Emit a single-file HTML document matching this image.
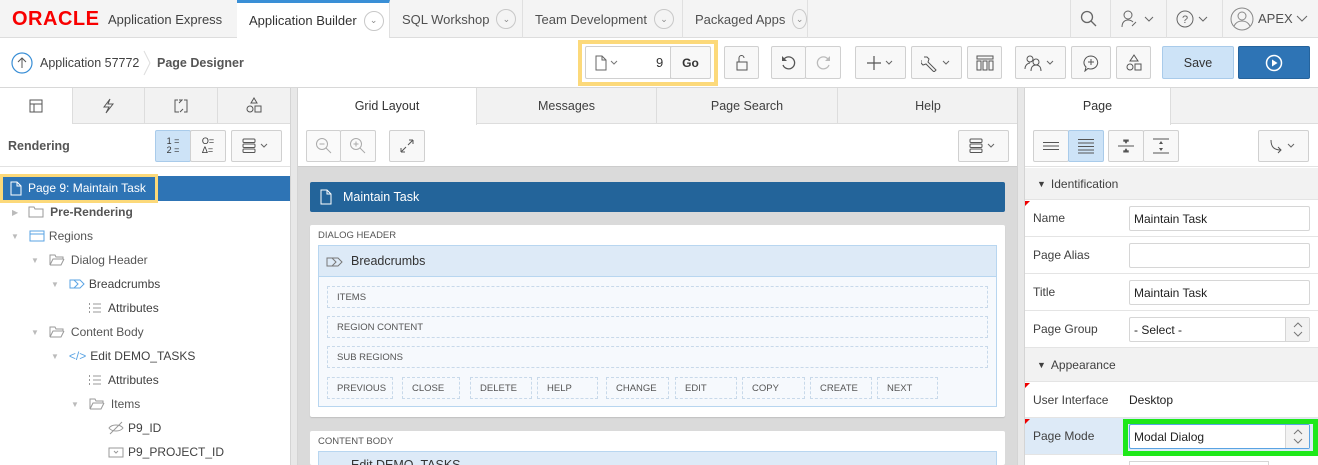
<!DOCTYPE html>
<html><head><meta charset="utf-8"><style>
*{box-sizing:border-box;margin:0;padding:0}
html{width:1318px;height:465px;overflow:hidden}
body{width:1318px;height:465px;overflow:hidden;font-family:"Liberation Sans",sans-serif;font-size:12px;color:#404040;background:#fff;position:relative}
.a{position:absolute}
.btn{position:absolute;border:1px solid #d0d0d0;border-radius:2px;background:#f8f8f8;display:flex;align-items:center;justify-content:center}
svg{display:block}
.tn{position:absolute;top:0;height:38px;border-right:1px solid #e0e0e0;display:flex;align-items:center;padding-left:12px;font-size:13px;color:#505050;white-space:nowrap}
.cv{width:20px;height:20px;border:1px solid #c8c8c8;border-radius:50%;margin-left:7px;display:flex;align-items:center;justify-content:center;font-size:9px;color:#888}
.tr{position:absolute;height:24px;display:flex;align-items:center;font-size:12px;color:#404040;white-space:nowrap}
.ph{position:absolute;left:327px;width:661px;height:22px;border:1px dashed #c8d9ea;font-size:9.5px;color:#555;display:flex;align-items:center;padding-left:9px}
.bb{position:absolute;top:377px;height:22px;border:1px dashed #c8d9ea;font-size:9.5px;color:#555;display:flex;align-items:center;padding-left:9px}
.row{position:absolute;left:1025px;width:293px;border-bottom:1px solid #e4e4e4;display:flex;align-items:center}
.row .l{width:104px;padding-left:8px;font-size:12px;color:#404040}
.inp{position:absolute;left:1129px;width:181px;height:25px;border:1px solid #d6d6d6;border-radius:2px;background:#fff;font-size:12px;color:#222;display:flex;align-items:center;padding-left:4px}
.sec{position:absolute;left:1025px;width:293px;background:#f2f2f2;border-bottom:1px solid #e4e4e4;display:flex;align-items:center;padding-left:12px;font-size:12px;color:#404040}
.red{position:absolute;left:1025px;width:0;height:0;border-top:5px solid #e00;border-right:5px solid transparent}
</style></head><body>
<!-- top nav -->
<div class="a" style="left:0;top:0;width:1318px;height:38px;background:#f4f4f4;border-bottom:1px solid #ddd"></div>
<div class="a" style="left:12px;top:8px;font-size:20px;font-weight:bold;color:#f80000;letter-spacing:0.5px">ORACLE</div>
<div class="a" style="left:108px;top:12px;font-size:13px;color:#404040">Application Express</div>
<div class="tn" style="left:237px;width:153px;background:#fff;border-top:3px solid #3a8fd6;color:#333">Application Builder<div class="cv">&#8964;</div></div>
<div class="tn" style="left:390px;width:133px">SQL Workshop<div class="cv">&#8964;</div></div>
<div class="tn" style="left:523px;width:160px">Team Development<div class="cv">&#8964;</div></div>
<div class="tn" style="left:683px;width:125px">Packaged Apps<div class="cv">&#8964;</div></div>
<div class="a" style="left:1070px;top:0;width:1px;height:38px;background:#e0e0e0"></div>
<div class="a" style="left:1110px;top:0;width:1px;height:38px;background:#e0e0e0"></div>
<div class="a" style="left:1166px;top:0;width:1px;height:38px;background:#e0e0e0"></div>
<div class="a" style="left:1222px;top:0;width:1px;height:38px;background:#e0e0e0"></div>
<svg class="a" style="left:1080px;top:10px" width="18" height="18"><circle cx="7" cy="7" r="5.5" fill="none" stroke="#666" stroke-width="1.3"/><path d="M11 11l5 5" stroke="#666" stroke-width="1.3"/></svg>
<svg class="a" style="left:1120px;top:9px" width="40" height="20"><circle cx="8" cy="6" r="4" fill="none" stroke="#666"/><path d="M2 18c0-5 3-7 6-7s4 1 5 2M12 17l4-4" stroke="#666" fill="none"/><path d="M25 8l4 4 4-4" stroke="#666" fill="none"/></svg>
<svg class="a" style="left:1176px;top:9px" width="40" height="20"><circle cx="9" cy="10" r="8" fill="none" stroke="#666"/><text x="6" y="14" font-size="11" fill="#666" font-family="Liberation Sans">?</text><path d="M23 8l4 4 4-4" stroke="#666" fill="none"/></svg>
<svg class="a" style="left:1230px;top:7px" width="24" height="24"><circle cx="12" cy="12" r="11" fill="none" stroke="#888"/><circle cx="12" cy="9" r="4" fill="none" stroke="#888"/><path d="M4 19c2-4 5-5 8-5s6 1 8 5" stroke="#888" fill="none"/></svg>
<div class="a" style="left:1258px;top:11px;font-size:13px;color:#505050">APEX</div>
<svg class="a" style="left:1296px;top:14px" width="12" height="10"><path d="M1 2l5 5 5-5" stroke="#666" fill="none"/></svg>
<!-- toolbar -->
<div class="a" style="left:0;top:87px;width:1318px;height:1px;background:#d8d8d8"></div>
<svg class="a" style="left:11px;top:52px" width="22" height="22"><circle cx="11" cy="11" r="10" fill="none" stroke="#3a8fd6" stroke-width="1.2"/><path d="M11 16V6M7 10l4-4 4 4" stroke="#555" fill="none"/></svg>
<div class="a" style="left:40px;top:56px;font-size:12.5px;color:#404040">Application 57772</div>
<svg class="a" style="left:143px;top:50px" width="8" height="26"><path d="M1 1l6 12-6 12" stroke="#ddd" fill="none"/></svg>
<div class="a" style="left:157px;top:56px;font-size:12.5px;font-weight:bold;color:#555">Page Designer</div>
<div class="a" style="left:578px;top:40px;width:140px;height:46px;border:4px solid #fcd97a"></div>
<div class="btn" style="left:585px;top:46px;width:86px;height:33px;justify-content:flex-start;padding-left:8px;border-radius:2px 0 0 2px;background:#fff">
<svg width="30" height="16"><path d="M2 1h6l4 4v10H2z M8 1v4h4" stroke="#666" fill="none"/><path d="M17 6l3 3 3-3" stroke="#777" fill="none"/></svg><span style="margin-left:32px;font-size:13px;color:#333">9</span></div>
<div class="btn" style="left:670px;top:46px;width:41px;height:33px;font-weight:bold;font-size:12px;color:#333">Go</div>
<div class="btn" style="left:724px;top:46px;width:35px;height:33px"><svg width="16" height="18"><rect x="3" y="8" width="10" height="8" fill="none" stroke="#555"/><path d="M5 8V4a2.5 2.5 0 0 1 5 0" stroke="#555" fill="none"/></svg></div>
<div class="btn" style="left:771px;top:46px;width:35px;height:33px"><svg width="18" height="18"><path d="M4 5a6 6 0 1 1-1 6" stroke="#555" fill="none" stroke-width="1.3"/><path d="M2 2v5h5" fill="#555"/></svg></div>
<div class="btn" style="left:805px;top:46px;width:36px;height:33px;background:#fafafa"><svg width="18" height="18"><path d="M14 5a6 6 0 1 0 1 6" stroke="#bbb" fill="none" stroke-width="1.3"/><path d="M16 2v5h-5" fill="#bbb"/></svg></div>
<div class="btn" style="left:855px;top:46px;width:51px;height:33px"><svg width="30" height="16"><path d="M8 1v14M1 8h14" stroke="#555" stroke-width="1.2"/><path d="M20 6l3 3 3-3" stroke="#666" fill="none"/></svg></div>
<div class="btn" style="left:911px;top:46px;width:51px;height:33px"><svg width="32" height="18"><path d="M3 3l3 0 2 2-1 3 8 8-2 2-8-8-3 1-2-2 0-3" stroke="#555" fill="none"/><path d="M22 7l3 3 3-3" stroke="#666" fill="none"/></svg></div>
<div class="btn" style="left:967px;top:46px;width:35px;height:33px"><svg width="18" height="16"><rect x="1" y="1" width="16" height="3" fill="none" stroke="#555"/><rect x="1" y="6" width="4" height="9" fill="none" stroke="#555"/><rect x="7" y="6" width="4" height="9" fill="none" stroke="#555"/><rect x="13" y="6" width="4" height="9" fill="none" stroke="#555"/></svg></div>
<div class="btn" style="left:1015px;top:46px;width:51px;height:33px"><svg width="34" height="18"><circle cx="6" cy="5" r="3" fill="none" stroke="#555"/><circle cx="12" cy="8" r="3" fill="none" stroke="#555"/><path d="M1 15c0-4 3-6 5-6M7 17c0-4 2-6 5-6s5 2 5 6" stroke="#555" fill="none"/><path d="M23 7l3 3 3-3" stroke="#666" fill="none"/></svg></div>
<div class="btn" style="left:1071px;top:46px;width:40px;height:33px"><svg width="18" height="18"><path d="M9 2a7 6.5 0 1 1-3 12.5L3 17l1-4A7 6.5 0 0 1 9 2z" stroke="#555" fill="none"/><path d="M9 5v6M6 8h6" stroke="#555"/></svg></div>
<div class="btn" style="left:1116px;top:46px;width:35px;height:33px"><svg width="18" height="18"><path d="M9 1l4 6H5z" stroke="#555" fill="none"/><circle cx="5" cy="13" r="3" fill="none" stroke="#555"/><rect x="10" y="10" width="6" height="6" fill="none" stroke="#555"/></svg></div>
<div class="btn" style="left:1162px;top:46px;width:72px;height:33px;background:#cde3f7;border-color:#a9cbea;font-size:12.5px;color:#333">Save</div>
<div class="btn" style="left:1238px;top:46px;width:72px;height:33px;background:#2e74b5;border-color:#25639c"><svg width="18" height="18"><circle cx="9" cy="9" r="7.5" fill="none" stroke="#fff" stroke-width="1.5"/><path d="M7 5.5v7l5.5-3.5z" fill="#fff"/></svg></div>
<!-- left panel -->
<div class="a" style="left:0;top:88px;width:290px;height:377px;background:#fff"></div>
<div class="a" style="left:72px;top:88px;width:218px;height:36px;background:#f2f2f2;border-bottom:1px solid #ddd;border-left:1px solid #ddd"></div>
<div class="a" style="left:144px;top:88px;width:1px;height:36px;background:#ddd"></div>
<div class="a" style="left:217px;top:88px;width:1px;height:36px;background:#ddd"></div>
<svg class="a" style="left:28px;top:98px" width="16" height="16"><rect x="2" y="2" width="12" height="12" fill="none" stroke="#555"/><path d="M2 6h12M6 6v8" stroke="#555"/></svg>
<svg class="a" style="left:100px;top:98px" width="16" height="16"><path d="M10 1L4 9h5l-3 6 7-9H8z" stroke="#555" fill="none"/></svg>
<svg class="a" style="left:172px;top:97px" width="18" height="18"><path d="M6 3H3v12h4M12 3h3v12h-3" stroke="#555" fill="none"/><path d="M7 6l3-3-3 0M11 12l-3 3" stroke="#555" fill="none"/></svg>
<svg class="a" style="left:245px;top:97px" width="18" height="18"><path d="M9 1l3 5H6z" stroke="#555" fill="none"/><circle cx="5" cy="12" r="3" fill="none" stroke="#555"/><rect x="10" y="9" width="6" height="6" fill="none" stroke="#555"/></svg>
<div class="a" style="left:8px;top:139px;font-size:12.5px;font-weight:bold;color:#555">Rendering</div>
<div class="btn" style="left:155px;top:130px;width:36px;height:32px;background:#cde3f7;border-color:#a9cbea;font-size:9px;line-height:9px;color:#333">1 =<br>2 =</div>
<div class="btn" style="left:190px;top:130px;width:36px;height:32px;font-size:9px;line-height:9px;color:#333">O=<br>Δ=</div>
<div class="btn" style="left:231px;top:130px;width:51px;height:32px"><svg width="32" height="16"><rect x="2" y="1" width="12" height="3.5" rx="1" fill="none" stroke="#555"/><rect x="2" y="6" width="12" height="3.5" rx="1" fill="none" stroke="#555"/><rect x="2" y="11" width="12" height="3.5" rx="1" fill="none" stroke="#555"/><path d="M20 6l3 3 3-3" stroke="#666" fill="none"/></svg></div>
<div class="a" style="left:0;top:166px;width:290px;height:1px;background:#e2e2e2"></div>
<div class="a" style="left:0;top:176px;width:290px;height:25px;background:#2e74b5"></div>
<div class="a" style="left:0;top:174px;width:158px;height:29px;border:3px solid #fcd97a"></div>
<svg class="a" style="left:10px;top:181px" width="12" height="15"><path d="M1 1h6l4 4v9H1z M7 1v4h4" stroke="#fff" fill="none"/></svg>
<div class="a" style="left:28px;top:181px;font-size:12px;color:#fff">Page 9: Maintain Task</div>
<div class="tr" style="left:12px;top:200px"><span style="color:#bbb;font-size:8px">▶</span><svg style="margin-left:10px" width="16" height="12"><path d="M1 1h5l1 2h8v8H1z" stroke="#999" fill="none"/></svg><b style="margin-left:6px;color:#555">Pre-Rendering</b></div>
<div class="tr" style="left:11px;top:224px"><span style="color:#bbb;font-size:8px">▼</span><svg style="margin-left:10px" width="16" height="12"><rect x="1" y="1" width="14" height="10" fill="none" stroke="#5aa3e3"/><path d="M1 4h14" stroke="#5aa3e3"/></svg><span style="margin-left:4px;color:#555">Regions</span></div>
<div class="tr" style="left:31px;top:248px"><span style="color:#bbb;font-size:8px">▼</span><svg style="margin-left:10px" width="16" height="12"><path d="M1 1h5l1 2h7v2H4l-3 6z M1 11h11l3-6" stroke="#999" fill="none"/></svg><span style="margin-left:6px;color:#555">Dialog Header</span></div>
<div class="tr" style="left:51px;top:272px"><span style="color:#bbb;font-size:8px">▼</span><svg style="margin-left:10px" width="16" height="12"><path d="M1 2h10l4 4-4 4H1z M5 2l4 4-4 4" stroke="#5aa3e3" fill="none"/></svg><span style="margin-left:4px">Breadcrumbs</span></div>
<div class="tr" style="left:88px;top:296px"><svg width="14" height="12"><path d="M1 2h1M1 6h1M1 10h1" stroke="#999" stroke-width="2"/><path d="M5 2h8M5 6h8M5 10h8" stroke="#999"/></svg><span style="margin-left:6px">Attributes</span></div>
<div class="tr" style="left:31px;top:320px"><span style="color:#bbb;font-size:8px">▼</span><svg style="margin-left:10px" width="16" height="12"><path d="M1 1h5l1 2h7v2H4l-3 6z M1 11h11l3-6" stroke="#999" fill="none"/></svg><span style="margin-left:6px;color:#555">Content Body</span></div>
<div class="tr" style="left:51px;top:344px"><span style="color:#bbb;font-size:8px">▼</span><span style="margin-left:10px;color:#5aa3e3;font-size:12px">&lt;/&gt;</span><span style="margin-left:4px">Edit DEMO_TASKS</span></div>
<div class="tr" style="left:88px;top:368px"><svg width="14" height="12"><path d="M1 2h1M1 6h1M1 10h1" stroke="#999" stroke-width="2"/><path d="M5 2h8M5 6h8M5 10h8" stroke="#999"/></svg><span style="margin-left:6px">Attributes</span></div>
<div class="tr" style="left:71px;top:392px"><span style="color:#bbb;font-size:8px">▼</span><svg style="margin-left:10px" width="16" height="12"><path d="M1 1h5l1 2h7v2H4l-3 6z M1 11h11l3-6" stroke="#999" fill="none"/></svg><span style="margin-left:6px;color:#555">Items</span></div>
<div class="tr" style="left:108px;top:416px"><svg width="16" height="14"><path d="M1 7c3-4 11-4 14 0-3 4-11 4-14 0z M2 13L14 1" stroke="#999" fill="none"/></svg><span style="margin-left:4px">P9_ID</span></div>
<div class="tr" style="left:108px;top:440px"><svg width="16" height="12"><path d="M1 2h14v9H1z M1 2h2" stroke="#999" fill="none"/><path d="M6 5l2 2 2-2" stroke="#999" fill="none"/></svg><span style="margin-left:4px">P9_PROJECT_ID</span></div>
<div class="a" style="left:290px;top:88px;width:8px;height:377px;background:#e8e8e8;border-left:1px solid #d4d4d4;border-right:1px solid #d4d4d4"></div>
<!-- middle -->
<div class="a" style="left:298px;top:88px;width:720px;height:36px;background:#f2f2f2;border-bottom:1px solid #ddd"></div>
<div class="a" style="left:298px;top:88px;width:179px;height:37px;background:#fff;border-right:1px solid #ddd;text-align:center;line-height:36px;font-size:12.5px;color:#333">Grid Layout</div>
<div class="a" style="left:477px;top:88px;width:180px;height:36px;border-right:1px solid #ddd;text-align:center;line-height:36px;font-size:12.5px;color:#404040">Messages</div>
<div class="a" style="left:657px;top:88px;width:181px;height:36px;border-right:1px solid #ddd;text-align:center;line-height:36px;font-size:12.5px;color:#404040">Page Search</div>
<div class="a" style="left:838px;top:88px;width:180px;height:36px;text-align:center;line-height:36px;font-size:12.5px;color:#404040">Help</div>
<div class="btn" style="left:306px;top:130px;width:35px;height:32px;background:#fafafa"><svg width="18" height="18"><circle cx="7" cy="7" r="5.5" fill="none" stroke="#aaa"/><path d="M11 11l5 5M4.5 7h5" stroke="#aaa"/></svg></div>
<div class="btn" style="left:340px;top:130px;width:36px;height:32px;background:#fafafa"><svg width="18" height="18"><circle cx="7" cy="7" r="5.5" fill="none" stroke="#aaa"/><path d="M11 11l5 5M4.5 7h5M7 4.5v5" stroke="#aaa"/></svg></div>
<div class="btn" style="left:389px;top:130px;width:36px;height:32px"><svg width="16" height="16"><path d="M2 14l5-5M9 7l5-5M2 14v-4M2 14h4M14 2h-4M14 2v4" stroke="#555" fill="none"/></svg></div>
<div class="btn" style="left:958px;top:130px;width:51px;height:32px"><svg width="32" height="16"><rect x="2" y="1" width="12" height="3.5" rx="1" fill="none" stroke="#555"/><rect x="2" y="6" width="12" height="3.5" rx="1" fill="none" stroke="#555"/><rect x="2" y="11" width="12" height="3.5" rx="1" fill="none" stroke="#555"/><path d="M20 6l3 3 3-3" stroke="#666" fill="none"/></svg></div>
<div class="a" style="left:298px;top:166px;width:720px;height:299px;background:#dadada;border-top:1px solid #ccc"></div>
<div class="a" style="left:310px;top:182px;width:695px;height:30px;background:#23649a;border-radius:2px"></div>
<svg class="a" style="left:320px;top:189px" width="12" height="16"><path d="M1 1h6l4 4v10H1z M7 1v4h4" stroke="#fff" fill="none"/></svg>
<div class="a" style="left:343px;top:190px;font-size:12.5px;color:#fff">Maintain Task</div>
<div class="a" style="left:310px;top:225px;width:695px;height:192px;background:#fff;border-radius:2px;box-shadow:0 1px 1px rgba(0,0,0,.12)"></div>
<div class="a" style="left:318px;top:230px;font-size:9.5px;color:#555">DIALOG HEADER</div>
<div class="a" style="left:318px;top:245px;width:679px;height:162px;background:#f6f9fd;border:1px solid #b8d6f0"></div>
<div class="a" style="left:319px;top:246px;width:677px;height:31px;background:#ddeaf7;border-bottom:1px solid #b8d6f0"></div>
<svg class="a" style="left:326px;top:256px" width="18" height="12"><path d="M1 2h11l4 4-4 4H1z M6 2l4 4-4 4" stroke="#777" fill="none"/></svg>
<div class="a" style="left:351px;top:254px;font-size:12.5px;color:#333">Breadcrumbs</div>
<div class="ph" style="top:286px">ITEMS</div>
<div class="ph" style="top:316px">REGION CONTENT</div>
<div class="ph" style="top:346px">SUB REGIONS</div>
<div class="bb" style="left:327px;width:66px">PREVIOUS</div>
<div class="bb" style="left:402px;width:58px">CLOSE</div>
<div class="bb" style="left:470px;width:62px">DELETE</div>
<div class="bb" style="left:537px;width:61px">HELP</div>
<div class="bb" style="left:606px;width:63px">CHANGE</div>
<div class="bb" style="left:675px;width:62px">EDIT</div>
<div class="bb" style="left:742px;width:63px">COPY</div>
<div class="bb" style="left:810px;width:62px">CREATE</div>
<div class="bb" style="left:877px;width:61px">NEXT</div>
<div class="a" style="left:310px;top:431px;width:695px;height:34px;background:#fff;border-radius:2px"></div>
<div class="a" style="left:318px;top:436px;font-size:9.5px;color:#555">CONTENT BODY</div>
<div class="a" style="left:318px;top:451px;width:679px;height:14px;background:#ddeaf7;border:1px solid #b8d6f0;border-bottom:none"></div>
<div class="a" style="left:351px;top:458px;font-size:12.5px;color:#333">Edit DEMO_TASKS</div>
<div class="a" style="left:1017px;top:88px;width:8px;height:377px;background:#e8e8e8;border-left:1px solid #d4d4d4;border-right:1px solid #d4d4d4"></div>
<!-- right -->
<div class="a" style="left:1025px;top:88px;width:293px;height:36px;background:#f2f2f2;border-bottom:1px solid #ddd"></div>
<div class="a" style="left:1025px;top:88px;width:146px;height:37px;background:#fff;border-right:1px solid #ddd;text-align:center;line-height:36px;font-size:12.5px;color:#333">Page</div>
<div class="btn" style="left:1033px;top:130px;width:36px;height:32px"><svg width="16" height="10"><path d="M0 1.5h16M0 5h16M0 8.5h16" stroke="#555"/></svg></div>
<div class="btn" style="left:1068px;top:130px;width:36px;height:32px;background:#cde3f7;border-color:#a9cbea"><svg width="16" height="16"><path d="M0 1.5h16M0 5h16M0 8.5h16M0 12h16M0 15h16" stroke="#555"/></svg></div>
<div class="btn" style="left:1108px;top:130px;width:36px;height:32px"><svg width="16" height="16"><path d="M0 8h16" stroke="#555"/><path d="M5 3h6M5 13h6M8 5L6 2h4zM8 11l-2 3h4z" stroke="#555" fill="#555"/></svg></div>
<div class="btn" style="left:1143px;top:130px;width:36px;height:32px"><svg width="16" height="16"><path d="M0 1h16M0 15h16" stroke="#555"/><path d="M8 3l-2 3h4zM8 13l-2-3h4z" fill="#555"/></svg></div>
<div class="btn" style="left:1258px;top:130px;width:51px;height:32px"><svg width="32" height="16"><path d="M3 2c0 7 3 10 10 10M10 9l3 3-3 3" stroke="#555" fill="none"/><path d="M20 6l3 3 3-3" stroke="#666" fill="none"/></svg></div>
<div class="a" style="left:1025px;top:166px;width:293px;height:1px;background:#e2e2e2"></div>
<div class="sec" style="top:168px;height:32px"><span style="font-size:9px;margin-right:5px">▼</span>Identification</div>
<div class="row" style="top:200px;height:37px"><div class="l">Name</div></div><div class="red" style="top:201px"></div>
<div class="inp" style="top:206px">Maintain Task</div>
<div class="row" style="top:237px;height:37px"><div class="l">Page Alias</div></div>
<div class="inp" style="top:243px"></div>
<div class="row" style="top:274px;height:37px"><div class="l">Title</div></div>
<div class="inp" style="top:280px">Maintain Task</div>
<div class="row" style="top:311px;height:37px"><div class="l">Page Group</div></div>
<div class="inp" style="top:317px">- Select -</div>
<div class="a" style="left:1285px;top:318px;width:24px;height:23px;background:#f2f2f2;border-left:1px solid #d6d6d6"><svg width="24" height="23"><path d="M8 9l4-4 4 4M8 14l4 4 4-4" stroke="#777" fill="none"/></svg></div>
<div class="sec" style="top:348px;height:34px"><span style="font-size:9px;margin-right:5px">▼</span>Appearance</div>
<div class="row" style="top:382px;height:36px"><div class="l">User Interface</div><span style="color:#222;font-size:12px">Desktop</span></div><div class="red" style="top:383px"></div>
<div class="row" style="top:418px;height:37px;background:#ddeaf7"><div class="l">Page Mode</div></div><div class="red" style="top:419px"></div>
<div class="a" style="left:1123px;top:419px;width:195px;height:37px;border:5px solid #1ee81a"></div>
<div class="inp" style="top:424px;border-color:#5aa3e3">Modal Dialog</div>
<div class="a" style="left:1285px;top:425px;width:24px;height:23px;background:#f2f2f2;border-left:1px solid #d6d6d6"><svg width="24" height="23"><path d="M8 9l4-4 4 4M8 14l4 4 4-4" stroke="#777" fill="none"/></svg></div>
<div class="a" style="left:1129px;top:461px;width:140px;height:4px;border:1px solid #d6d6d6;border-bottom:none;background:#fff"></div>
</body></html>
